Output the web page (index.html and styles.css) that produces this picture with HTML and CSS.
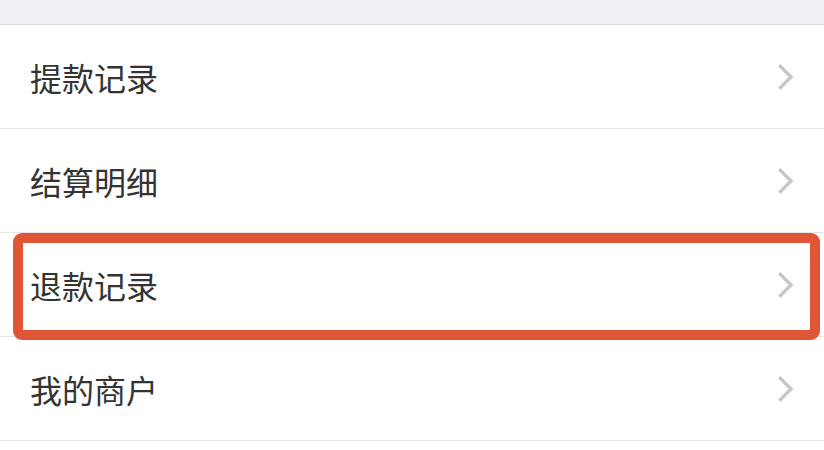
FILE: index.html
```html
<!DOCTYPE html>
<html lang="zh">
<head>
<meta charset="utf-8">
<link rel="stylesheet" href="styles.css">
</head>
<body>
<div class="page">
  <div class="band"></div>
  <ul class="list">
    <li class="row"><span class="label">提款记录</span><svg class="chev" viewBox="0 0 16 26"><path d="M2.5 2.5 L13 13 L2.5 23.5" /></svg></li>
    <li class="row"><span class="label">结算明细</span><svg class="chev" viewBox="0 0 16 26"><path d="M2.5 2.5 L13 13 L2.5 23.5" /></svg></li>
    <li class="row highlighted"><span class="label">退款记录</span><svg class="chev" viewBox="0 0 16 26"><path d="M2.5 2.5 L13 13 L2.5 23.5" /></svg><span class="mark"></span></li>
    <li class="row"><span class="label">我的商户</span><svg class="chev" viewBox="0 0 16 26"><path d="M2.5 2.5 L13 13 L2.5 23.5" /></svg></li>
  </ul>
</div>
</body>
</html>
```
FILE: styles.css
```css
* { box-sizing: border-box; }
html, body { margin: 0; padding: 0; background: #fff; }
body { font-family: "Noto Sans CJK SC", "Noto Sans", sans-serif; }
.page { width: 824px; height: 450px; overflow: hidden; }
.band { height: 25px; background: #efeff4; border-bottom: 1px solid #dcdcdf; }
.list { list-style: none; margin: 0; padding: 0; }
.row {
  position: relative;
  height: 104px;
  border-bottom: 1px solid #e5e5e5;
  display: flex;
  align-items: center;
  justify-content: space-between;
  padding: 0 30px 0 30px;
}
.label { font-size: 32px; color: #333; letter-spacing: 0; line-height: 1; }
.chev { width: 16px; height: 26px; }
.chev path { fill: none; stroke: #c7c7cc; stroke-width: 3.4; stroke-linecap: square; stroke-linejoin: miter; }
.mark {
  position: absolute;
  left: 13px;
  top: 0;
  width: 807px;
  height: 107px;
  border: 10px solid #e05535;
  border-radius: 9px;
  pointer-events: none;
}
```
